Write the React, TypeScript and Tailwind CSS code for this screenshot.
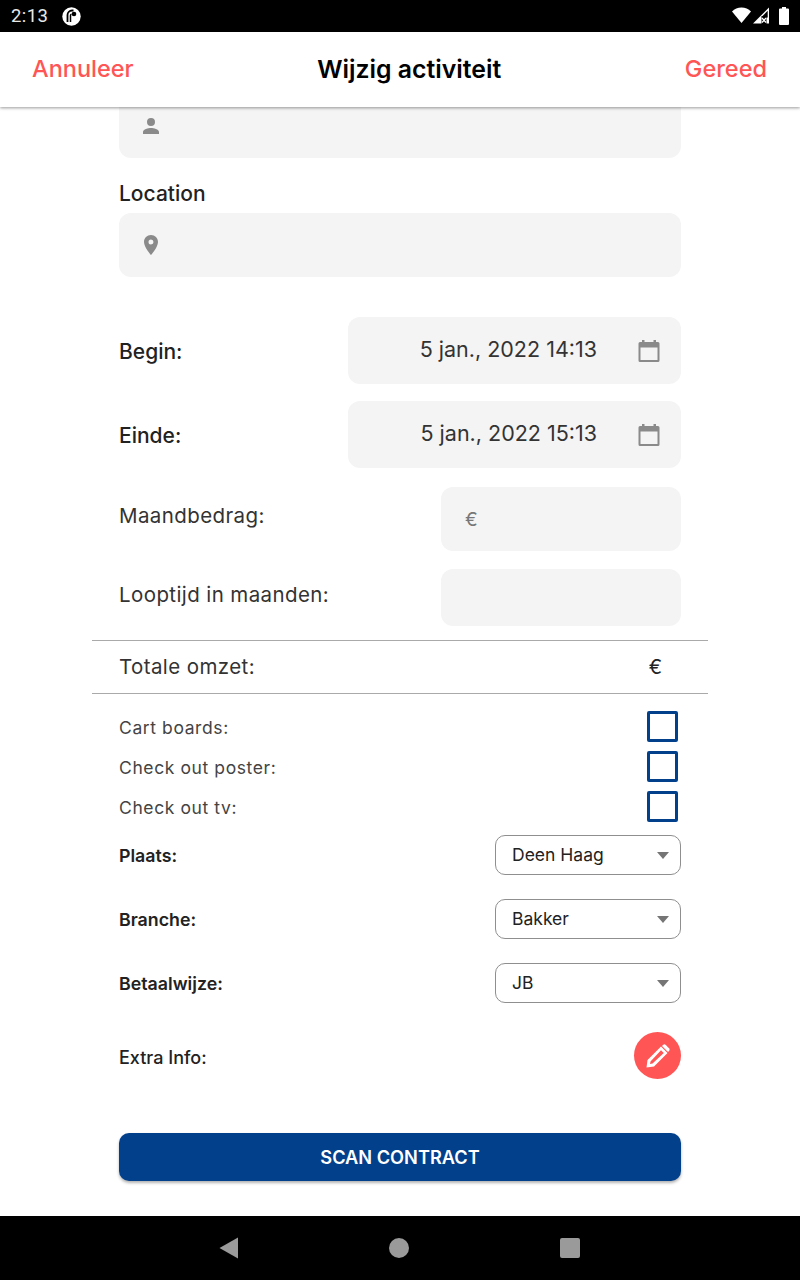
import type { ReactNode } from "react";

const font = "font-['Inter','Liberation_Sans',sans-serif]";

function StatusBar() {
  return (
    <div className="h-8 shrink-0 bg-black flex items-center justify-between pl-[11px] pr-[10px]">
      <div className="flex items-center gap-[14px]">
        <span className="font-['Roboto',sans-serif] text-[18.500px] leading-none text-[#e8e8e8] tracking-[0.4px]">2:13</span>
        <svg width="19" height="19" viewBox="0 0 19 19">
          <circle cx="9.500" cy="9.500" r="9.200" fill="#fff" />
          <path d="M5.500 15V8a4.500 4.500 0 0 1 4.500-4.500h1.500" fill="none" stroke="#000" strokeWidth="1.800" />
          <path d="M8.500 15V8.500a1.500 1.500 0 0 1 1-1.400" fill="none" stroke="#000" strokeWidth="1.500" />
          <circle cx="12" cy="7" r="2.300" fill="#000" />
        </svg>
      </div>
      <div className="flex items-center gap-[9px]">
        <svg width="38" height="18" viewBox="0 0 38 18">
          <path d="M0 4.500C2.500 1.800 5.800 0.500 9.500 0.500s7 1.300 9.500 4L9.500 16z" fill="#fff" />
          <path d="M21 16.500 L37 0.500 V16.500z" fill="#fff" />
          <path d="M30 9.500 L35.700 3.800 V10.500 H30z" fill="#000" />
          <path d="M29.500 9h5v8.500h-5z" fill="#000" />
          <path d="M30 11l4 4.500m0-4.500l-4 4.500" stroke="#fff" strokeWidth="1.300" />
        </svg>
        <svg width="10" height="18" viewBox="0 0 10 18" className="mr-[1px]">
          <path d="M3 0h4v1.500h2a1 1 0 0 1 1 1V17a1 1 0 0 1-1 1H1a1 1 0 0 1-1-1V2.500a1 1 0 0 1 1-1h2z" fill="#fff" />
        </svg>
      </div>
    </div>
  );
}

function Header() {
  return (
    <div className="relative z-10 h-[75px] shrink-0 bg-white flex items-center justify-between pl-[32px] pr-[33px] shadow-[0_1px_3px_rgba(0,0,0,0.4)]">
      <span className="text-[23.500px] leading-none text-[#ff5555] font-medium -mt-[2px]">Annuleer</span>
      <span className="text-[24.800px] leading-none text-black font-semibold">Wijzig activiteit</span>
      <span className="text-[23.500px] leading-none text-[#ff5555] font-medium -mt-[2px]">Gereed</span>
    </div>
  );
}

function CalendarIcon() {
  return (
    <svg width="22" height="24" viewBox="0 0 22 24">
      <path d="M4 1h2.500v2h9V1H18v2h2a1.500 1.500 0 0 1 1.500 1.500v17A1.500 1.500 0 0 1 20 23H2A1.500 1.500 0 0 1 .5 21.500v-17A1.500 1.500 0 0 1 2 3h2z" fill="#8a8a8a" />
      <rect x="2.500" y="8.500" width="17" height="12.500" fill="#f4f4f4" />
    </svg>
  );
}

function DateRow({ label, value, className }: { label: string; value: string; className: string }) {
  return (
    <div className={`flex items-center justify-between ${className}`}>
      <span className="text-[21px] font-medium text-[#222] mt-[2px]">{label}</span>
      <div className="w-[333px] h-[67px] rounded-[12px] bg-[#f4f4f4] flex items-center justify-end pr-[21px]">
        <span className="text-[21.500px] text-[#333] mr-[41px] -mt-[2px]">{value}</span>
        <CalendarIcon />
      </div>
    </div>
  );
}

function AmountRow({ label, height, className, children }: { label: string; height: string; className: string; children?: ReactNode }) {
  return (
    <div className={`flex items-center justify-between ${className}`}>
      <span className="text-[20.500px] text-[#333] tracking-[0.4px] -mt-[5px]">{label}</span>
      <div className={`w-[240px] rounded-[12px] bg-[#f4f4f4] flex items-center pl-[24px] ${height}`}>{children}</div>
    </div>
  );
}

function CheckRow({ label }: { label: string }) {
  return (
    <div className="h-[40px] flex items-center justify-between pr-[3px]">
      <span className="text-[17.500px] text-[#444] tracking-[0.6px] mt-[2px]">{label}</span>
      <div className="w-[31px] h-[31px] rounded-[2px] border-[3px] border-[#03408c] -mt-[2px]" />
    </div>
  );
}

function SelectRow({ label, value, className }: { label: string; value: string; className: string }) {
  return (
    <div className={`flex items-center justify-between ${className}`}>
      <span className="text-[17.800px] font-semibold text-[#222] mt-[2px]">{label}</span>
      <div className="w-[186px] h-[40px] rounded-[10px] border border-[#8f8f8f] bg-white flex items-center justify-between pl-[16px] pr-[11px]">
        <span className="text-[17.500px] text-[#222]">{value}</span>
        <svg width="12" height="7" viewBox="0 0 12 7"><path d="M0 0h12L6 7z" fill="#757575" /></svg>
      </div>
    </div>
  );
}

function NavBar() {
  return (
    <div className="h-16 shrink-0 bg-black flex items-center justify-center">
      <svg width="20" height="22" viewBox="0 0 20 22" className="mr-[150px] -ml-[2px]"><path d="M19 0.500v21L0.500 11z" fill="#9a9a9a" /></svg>
      <svg width="20" height="20" viewBox="0 0 20 20" className="mr-[151px]"><circle cx="10" cy="10" r="10" fill="#9a9a9a" /></svg>
      <svg width="20" height="20" viewBox="0 0 20 20"><rect width="20" height="20" rx="2" fill="#9a9a9a" /></svg>
    </div>
  );
}

export default function App() {
  return (
    <div className={`w-[800px] h-[1280px] flex flex-col bg-white overflow-hidden ${font}`}>
      <StatusBar />
      <Header />
      <div className="flex-1 px-[119px]">
        <div className="h-[51px] rounded-b-[12px] bg-[#f4f4f4] flex items-center pl-[20px]">
          <svg width="24" height="24" viewBox="0 0 24 24" className="-mt-[13px]">
            <path d="M12 12a4 4 0 1 0 0-8 4 4 0 0 0 0 8zm0 2c-2.700 0-8 1.300-8 4v2h16v-2c0-2.700-5.300-4-8-4z" fill="#8a8a8a" />
          </svg>
        </div>
        <div className="mt-[22px] h-[28px] text-[21px] leading-[28px] font-medium text-[#222]">Location</div>
        <div className="mt-[5px] h-[64px] rounded-[12px] bg-[#f4f4f4] flex items-center pl-[20px]">
          <svg width="24" height="24" viewBox="0 0 24 24">
            <path d="M12 2C8.100 2 5 5.100 5 9c0 5.200 7 13 7 13s7-7.800 7-13c0-3.900-3.100-7-7-7zm0 9.500a2.500 2.500 0 1 1 0-5 2.500 2.500 0 0 1 0 5z" fill="#8a8a8a" />
          </svg>
        </div>

        <DateRow label="Begin:" value="5 jan., 2022 14:13" className="mt-[40px]" />
        <DateRow label="Einde:" value="5 jan., 2022 15:13" className="mt-[17px]" />
        <AmountRow label="Maandbedrag:" height="h-[64px]" className="mt-[19px]">
          <span className="text-[19px] text-[#777] mt-[2px]">€</span>
        </AmountRow>
        <AmountRow label="Looptijd in maanden:" height="h-[57px]" className="mt-[18px]" />

        <div className="mt-[14px] -mx-[27px] px-[27px] h-[54px] border-y border-[#aaaaaa] flex items-center justify-between">
          <span className="text-[20.500px] text-[#333] tracking-[0.4px]">Totale omzet:</span>
          <span className="text-[20px] text-[#222] mr-[19px]">€</span>
        </div>

        <div className="mt-[13px]">
          <CheckRow label="Cart boards:" />
          <CheckRow label="Check out poster:" />
          <CheckRow label="Check out tv:" />
        </div>

        <SelectRow label="Plaats:" value="Deen Haag" className="mt-[8px]" />
        <SelectRow label="Branche:" value="Bakker" className="mt-[24px]" />
        <SelectRow label="Betaalwijze:" value="JB" className="mt-[24px]" />

        <div className="mt-[29px] flex items-center justify-between">
          <span className="text-[18px] font-medium text-[#222] mt-[3px]">Extra Info:</span>
          <div className="w-[47px] h-[47px] rounded-full bg-[#ff5555] flex items-center justify-center">
            <svg width="26" height="26" viewBox="0 0 26 26">
              <path d="M1.500 24.500 L2.500 17 L16 3.500 L22.500 10 L9 23.500 Z M5.500 18.500 L5 21 L7.500 20.500 L18.800 10 L16 7.200 Z" fill="#fff" fillRule="evenodd" />
              <path d="M18 2a2 2 0 0 1 2.800 0l3.200 3.200a2 2 0 0 1 0 2.800L23 9 17 3z" fill="#fff" />
            </svg>
          </div>
        </div>

        <div className="mt-[54px] h-[48px] rounded-[10px] bg-[#03408c] shadow-[0_2px_3px_rgba(0,0,0,0.3)] flex items-center justify-center">
          <span className="text-[18.200px] font-semibold text-white mt-[2px]">SCAN CONTRACT</span>
        </div>
      </div>
      <NavBar />
    </div>
  );
}
